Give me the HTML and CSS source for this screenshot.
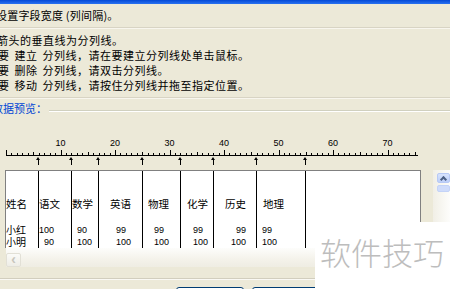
FILE: index.html
```html
<!DOCTYPE html>
<html lang="zh-CN">
<head>
  <meta charset="UTF-8">
  <meta name="viewport" content="width=device-width, initial-scale=1.0">
  <title>文本导入向导 - 步骤之 2</title>
  <link rel="stylesheet" href="styles.css">
</head>
<body>

  <div class="titlebar"></div>

  <div class="head">设置字段宽度 (列间隔)。</div>

  <div class="tips">
    <p class="first">箭头的垂直线为分列线。</p>
    <p>要 建立 分列线，请在要建立分列线处单击鼠标。</p>
    <p>要 删除 分列线，请双击分列线。</p>
    <p>要 移动 分列线，请按住分列线并拖至指定位置。</p>
  </div>

  <div class="group">
    <span class="group-title">数据预览：</span>
    <span class="groove"></span>
  </div>

  <!-- ruler: one tick per character -->
  <div class="scale">
    <span>10</span><span>20</span><span>30</span><span>40</span><span>50</span><span>60</span><span>70</span>
  </div>
  <div class="ticks"></div>

  <div class="marks">
    <div class="mark w33"><i class="arrow"></i></div>
    <div class="mark w33"><i class="arrow"></i></div>
    <div class="mark w27"><i class="arrow"></i></div>
    <div class="mark w44"><i class="arrow"></i></div>
    <div class="mark w38"><i class="arrow"></i></div>
    <div class="mark w33"><i class="arrow"></i></div>
    <div class="mark w43"><i class="arrow"></i></div>
    <div class="mark w49"><i class="arrow"></i></div>
  </div>

  <div class="viewer">
    <div class="pane">
      <div class="box">
        <div class="col w33 c1">
          <div class="hd">姓名</div>
          <div class="v name">小红</div>
          <div class="v name">小明</div>
        </div>
        <div class="col w33 c2 right">
          <div class="hd">语文</div>
          <div class="v">100</div>
          <div class="v">90</div>
        </div>
        <div class="col w27 c3">
          <div class="hd">数学</div>
          <div class="v">90</div>
          <div class="v">100</div>
        </div>
        <div class="col w44 c4">
          <div class="hd">英语</div>
          <div class="v">99</div>
          <div class="v">100</div>
        </div>
        <div class="col w38 c5">
          <div class="hd">物理</div>
          <div class="v">99</div>
          <div class="v">100</div>
        </div>
        <div class="col w33 c6">
          <div class="hd">化学</div>
          <div class="v">99</div>
          <div class="v">100</div>
        </div>
        <div class="col w43 c7 right">
          <div class="hd">历史</div>
          <div class="v">99</div>
          <div class="v">100</div>
        </div>
        <div class="col w49 c8">
          <div class="hd">地理</div>
          <div class="v">99</div>
          <div class="v">100</div>
        </div>
        <div class="col last"></div>
      </div>
      <div class="hscroll">
        <span class="sbtn left">&lsaquo;</span>
      </div>
    </div>
    <div class="vscroll">
      <span class="sbtn up"></span>
      <span class="thumb"></span>
    </div>
  </div>

  <div class="foot">
    <div class="buttons">
      <button class="btn">取消</button>
      <button class="btn">上一步</button>
    </div>
  </div>

  <div class="watermark">软件技巧</div>

</body>
</html>
```

FILE: styles.css
```css
html {
  overflow: hidden;
}
body {
  margin: 0;
  width: 450px;
  height: 289px;
  overflow: hidden;
  position: relative;
  background-color: #ece9d8;
  font-family: "Noto Sans CJK SC", "Liberation Sans", sans-serif;
  font-size: 11px;
  color: #000;
}
.titlebar {
  height: 4px;
  background: linear-gradient(#0349d6, #2a72f0);
}
.head {
  height: 23px;
  line-height: 23px;
  margin-left: -4px;
  letter-spacing: 0.2px;
  border-bottom: 1px solid #d8d4c4;
  box-shadow: 0 1px 0 #f8f6ee;
  white-space: nowrap;
}
.tips {
  padding: 5px 0 4px;
  border-bottom: 1px solid #d8d4c4;
  box-shadow: 0 1px 0 #f8f6ee;
}
.tips p {
  margin: 0 0 0 -2px;
  line-height: 15px;
  letter-spacing: 0.5px;
  word-spacing: 2px;
  white-space: pre;
}
.tips p.first {
  margin-left: -3px;
}
.group {
  display: flex;
  margin-top: 3px;
  height: 14px;
}
.group-title {
  margin-left: -8px;
  line-height: 14px;
  color: #0046d5;
  white-space: nowrap;
}
.groove {
  flex: 1;
  align-self: flex-start;
  margin: 9px 0 0 2px;
  border-top: 1px solid #d0d0bf;
  border-bottom: 1px solid #fff;
}
.scale {
  display: flex;
  margin-top: 22px;
  padding-left: 33.25px;
  font-family: "Liberation Sans", sans-serif;
  font-size: 9px;
  line-height: 12px;
}
.scale span {
  width: 54.5px;
  flex: none;
  text-align: center;
}
.ticks {
  margin: 1px 0 0 6px;
  width: 412px;
  height: 5px;
  border-bottom: 1px solid #000;
  background:
    repeating-linear-gradient(90deg, #000 0 1px, transparent 1px 54.5px) left bottom / 100% 5px no-repeat,
    repeating-linear-gradient(90deg, #000 0 1px, transparent 1px 27.25px) left bottom / 100% 3px no-repeat,
    repeating-linear-gradient(90deg, #000 0 1px, transparent 1px 5.45px) left bottom / 100% 2px no-repeat;
}
.marks {
  display: flex;
  margin: 1px 0 0 6px;
  height: 8px;
}
.mark {
  flex: none;
  display: flex;
  justify-content: flex-end;
}
.arrow {
  display: block;
  width: 5px;
  height: 8px;
  margin-right: -2px;
  background: linear-gradient(#000, #000) 2px 3px / 1px 5px no-repeat;
}
.arrow::before {
  content: "";
  display: block;
  width: 0;
  border-left: 2.5px solid transparent;
  border-right: 2.5px solid transparent;
  border-bottom: 3px solid #000;
}
.w27 { width: 27px; }
.w33 { width: 33px; }
.w38 { width: 38px; }
.w43 { width: 43px; }
.w44 { width: 44px; }
.w49 { width: 49px; }

.viewer {
  display: flex;
  margin-top: 5px;
}
.pane {
  margin-left: 5px;
  width: 416px;
}
.box {
  display: flex;
  height: 77px;
  background-color: #fff;
  border: 1px solid #808080;
  border-bottom: none;
  overflow: hidden;
}
.col {
  flex: none;
  box-sizing: border-box;
  padding-top: 26px;
  border-right: 1px solid #000;
  white-space: nowrap;
}
.col.last {
  flex: 1;
  border-right: none;
}
.col .hd {
  height: 14px;
  line-height: 14px;
  margin-bottom: 13px;
  font-size: 10.5px;
  padding-left: var(--h, 0);
}
.col .v {
  height: 12px;
  line-height: 12px;
  font-family: "Liberation Sans", sans-serif;
  font-size: 9px;
  padding-left: var(--v, 0);
}
.col .v.name {
  font-family: "Noto Sans CJK SC", sans-serif;
  font-size: 10px;
}
.col.right .v {
  text-align: right;
  padding-left: 0;
  padding-right: var(--r, 0);
}
.c3 { --v: 5px; }
.c2 { --r: 17px; }
.c4 { --h: 11px; --v: 17px; }
.c5 { --h: 5px; --v: 11px; }
.c6 { --h: 6px; --v: 12px; }
.c7 { --h: 11px; --r: 10px; }
.c8 { --h: 6px; --v: 5px; }

.hscroll {
  height: 19px;
  margin-left: 1px;
  padding-top: 5px;
  box-sizing: border-box;
  background: linear-gradient(#fdfdfb, #f4f2ea 60%, #efede3);
}
.sbtn {
  display: block;
  box-sizing: border-box;
  border: 1px solid #e2e0d6;
  border-radius: 2px;
  background: linear-gradient(#fbfbf8, #eeede6);
}
.sbtn.left {
  width: 15px;
  height: 14px;
  color: #c8c6bc;
  font: bold 14px/11px "Liberation Sans", sans-serif;
  text-align: center;
}
.vscroll {
  margin-left: 12px;
  width: 17px;
  padding: 3px 0 0 4px;
  box-sizing: border-box;
  background: linear-gradient(90deg, #f1efe6, #fdfdfb);
}
.sbtn.up {
  width: 13px;
  height: 10px;
  border-color: #b7c9f5;
  background: linear-gradient(#d7e3fd, #bccff9);
}
.sbtn.up::before {
  content: "";
  display: block;
  width: 3px;
  height: 3px;
  margin: 3px auto 0;
  border-left: 2px solid #4d6185;
  border-top: 2px solid #4d6185;
  transform: rotate(45deg);
}
.thumb {
  display: block;
  width: 13px;
  height: 7px;
  margin-top: 2px;
  box-sizing: border-box;
  border: 1px solid #c4d3f7;
  border-radius: 2px;
  background: #cfdcfb;
}

.foot {
  height: 22px;
  padding-top: 11px;
  box-sizing: border-box;
  overflow: hidden;
}
.foot::before {
  content: "";
  display: block;
  border-top: 1px solid #d2cebe;
  border-bottom: 1px solid #faf9f4;
}
.buttons {
  display: flex;
  gap: 8px;
  margin-top: 7px;
  padding-left: 176px;
}
.btn {
  flex: none;
  width: 68px;
  height: 23px;
  border: 1px solid #003c74;
  border-radius: 3px;
  background: linear-gradient(#fff, #ecebe6);
  font-family: "Noto Sans CJK SC", sans-serif;
  font-size: 11px;
}

/* site watermark pasted over the screenshot */
.watermark {
  position: absolute;
  left: 315px;
  top: 222px;
  right: 0;
  bottom: 0;
  padding: 14px 0 0 5px;
  background-color: #fff;
  color: #bdbdbd;
  font-size: 31px;
  font-weight: 300;
  line-height: 31px;
  white-space: nowrap;
}
```
